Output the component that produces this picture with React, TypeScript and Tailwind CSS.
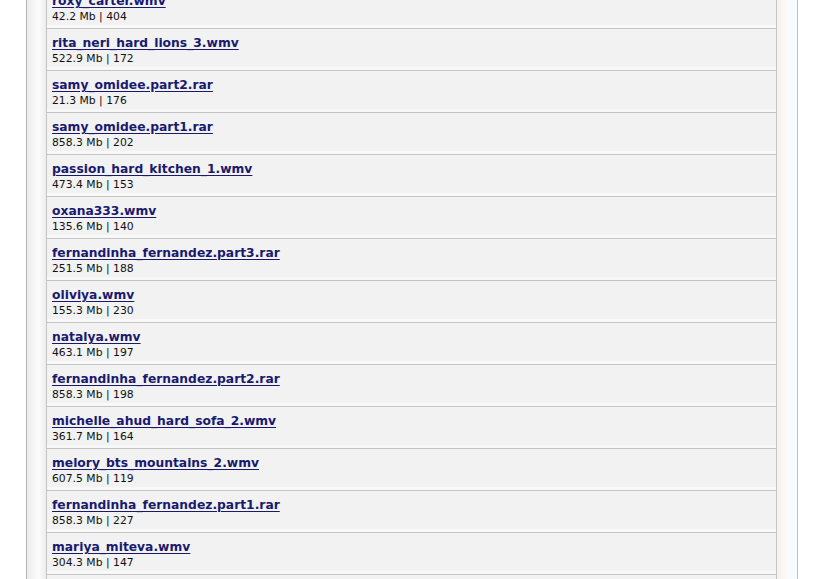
const files = [
  { name: "roxy_carter.wmv", size: "42.2 Mb", hits: 404 },
  { name: "rita_neri_hard_lions_3.wmv", size: "522.9 Mb", hits: 172 },
  { name: "samy_omidee.part2.rar", size: "21.3 Mb", hits: 176 },
  { name: "samy_omidee.part1.rar", size: "858.3 Mb", hits: 202 },
  { name: "passion_hard_kitchen_1.wmv", size: "473.4 Mb", hits: 153 },
  { name: "oxana333.wmv", size: "135.6 Mb", hits: 140 },
  { name: "fernandinha_fernandez.part3.rar", size: "251.5 Mb", hits: 188 },
  { name: "oliviya.wmv", size: "155.3 Mb", hits: 230 },
  { name: "natalya.wmv", size: "463.1 Mb", hits: 197 },
  { name: "fernandinha_fernandez.part2.rar", size: "858.3 Mb", hits: 198 },
  { name: "michelle_ahud_hard_sofa_2.wmv", size: "361.7 Mb", hits: 164 },
  { name: "melory_bts_mountains_2.wmv", size: "607.5 Mb", hits: 119 },
  { name: "fernandinha_fernandez.part1.rar", size: "858.3 Mb", hits: 227 },
  { name: "mariya_miteva.wmv", size: "304.3 Mb", hits: 147 },
  { name: "", size: "", hits: 0 },
];

function FileRow({ name, size, hits }: { name: string; size: string; hits: number }) {
  return (
    <div className="h-[42px] border-x border-t border-[#c4c4c4] bg-[#f2f2f2] flex flex-col">
      <div className="flex-1 pl-[5px] pt-[7px]">
        {name && (
          <>
            <a
              href="#"
              className="block w-fit text-[12.3px] leading-[15px] font-bold text-[#191a6e] underline underline-offset-[2px]"
            >
              {name}
            </a>
            <div className="text-[10.8px] leading-[15px] text-[#111]">
              {size} | {hits}
            </div>
          </>
        )}
      </div>
      <div className="h-[3px] bg-[#f8f8f8]" />
    </div>
  );
}

export default function App() {
  return (
    <div
      className="h-[579px] overflow-hidden bg-white"
      style={{ fontFamily: '"DejaVu Sans", Verdana, sans-serif' }}
    >
      <div className="flow-root ml-[26px] w-[772px] h-full border-l border-l-[#b4b4b4] border-r border-r-[#a9c6e2] pl-[19px] pr-[20px] bg-[linear-gradient(to_right,#ebebeb_0px,#fcfcfc_11px,#ededed_19px,#f0f0f0_740px,#f7f1ef_751px,#fbfbfb_760px,#f3fbff_770px)]">
        <div className="-mt-[14px]">
          {files.map((f, i) => (
            <FileRow key={i} {...f} />
          ))}
        </div>
      </div>
    </div>
  );
}
